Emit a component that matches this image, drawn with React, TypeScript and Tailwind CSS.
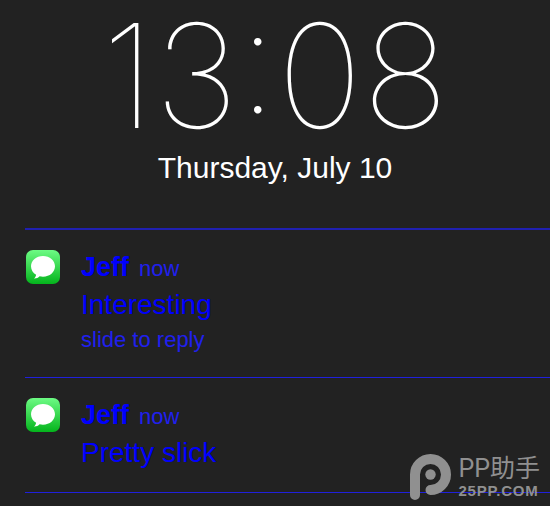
interface MessageNotification {
	id: number;
	sender: string;
	time: string;
	body: string;
	hint?: string;
}

const notifications: MessageNotification[] = [
	{
		id: 1,
		sender: "Jeff",
		time: "now",
		body: "Interesting",
		hint: "slide to reply",
	},
	{ id: 2, sender: "Jeff", time: "now", body: "Pretty slick" },
];

/** Green Messages app icon with a white speech bubble */
function MessagesIcon() {
	return (
		<svg viewBox="0 0 36 36" className="size-9 shrink-0" aria-hidden="true">
			<defs>
				<linearGradient id="messages-green" x1="0" y1="0" x2="0" y2="1">
					<stop offset="0" stopColor="#6dfb84" />
					<stop offset="1" stopColor="#04b41c" />
				</linearGradient>
			</defs>
			<rect x="1" y="1" width="34" height="34" rx="7" fill="url(#messages-green)" />
			<path
				d="M18 7C11.200 7 6 11.600 6 17.300c0 3.600 2 6.700 5.100 8.500-.2 1.600-.8 2.700-2.100 3.700 2.300.1 4.200-.6 5.600-2.200 1.100.3 2.200.4 3.400.4 6.800 0 12-4.600 12-10.400S24.800 7 18 7Z"
				fill="#fff"
			/>
		</svg>
	);
}

/** One message row of the lock screen list */
function NotificationItem({ sender, time, body, hint }: MessageNotification) {
	return (
		<li className="flex gap-5 border-[#2020dc] border-b pt-[19px] pb-[21px] text-[#0000ff]">
			<MessagesIcon />
			<div>
				<p className="flex items-baseline gap-[10px]">
					<span className="font-bold text-[27px] leading-9">{sender}</span>
					<span className="text-[#2020ee] text-[22px] leading-9">{time}</span>
				</p>
				<p className="text-[28px] leading-9">{body}</p>
				{hint && (
					<p className="text-[#2020ee] text-[22px] leading-[33px]">{hint}</p>
				)}
			</div>
		</li>
	);
}

/** PP助手 watermark */
function Watermark() {
	return (
		<div className="absolute right-[10px] bottom-[6px] flex items-center gap-[7px] text-[#909090]">
			<svg viewBox="0 0 41 46" className="h-[46px] w-[41px]" aria-hidden="true">
				<path
					d="M5 41V20.500a15.500 15.500 0 1 1 15.500 15.500"
					fill="none"
					stroke="currentColor"
					strokeWidth="10"
					strokeLinecap="round"
				/>
				<circle cx="20.500" cy="20.500" r="5.200" fill="currentColor" />
			</svg>
			<div>
				<p className="font-['Roboto','Noto_Sans_CJK_SC',sans-serif] text-[25px] leading-7">
					PP助手
				</p>
				<p className="font-bold text-[15px] leading-4 tracking-wider">25PP.COM</p>
			</div>
		</div>
	);
}

export default function App() {
	return (
		<main className="relative min-h-screen overflow-hidden bg-[#222222] font-['Liberation_Sans',Arial,sans-serif] text-white">
			<header className="text-center">
				<h1 className="font-['Inter',sans-serif] font-thin text-[144px] leading-[152px]">
					13:08
				</h1>
				<p className="text-[30px] leading-8">Thursday, July 10</p>
			</header>
			<ul className="mt-11 ml-[25px] border-[#2020b0] border-t-2">
				{notifications.map((item) => (
					<NotificationItem key={item.id} {...item} />
				))}
			</ul>
			<Watermark />
		</main>
	);
}
